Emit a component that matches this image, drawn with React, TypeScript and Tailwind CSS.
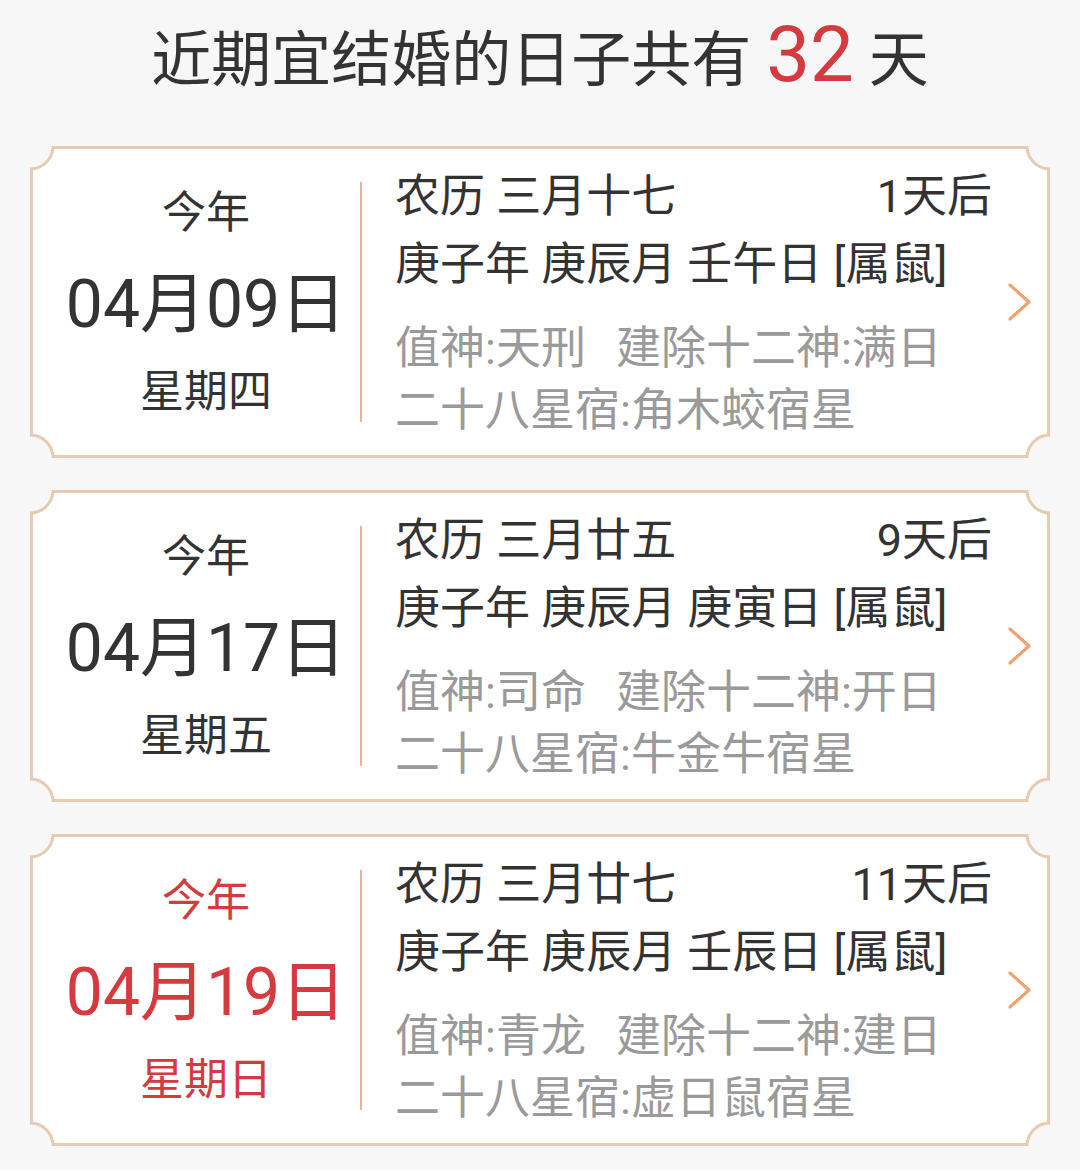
import React from "react";

type Day = {
  date: string;
  week: string;
  lunar: string;
  after: string;
  ganzhi: string;
  zhishen: string;
  jianchu: string;
  xingxiu: string;
  highlight?: boolean;
};

const DAYS: Day[] = [
  {
    date: "04月09日",
    week: "星期四",
    lunar: "农历 三月十七",
    after: "1天后",
    ganzhi: "庚子年 庚辰月 壬午日 [属鼠]",
    zhishen: "值神:天刑",
    jianchu: "建除十二神:满日",
    xingxiu: "二十八星宿:角木蛟宿星",
  },
  {
    date: "04月17日",
    week: "星期五",
    lunar: "农历 三月廿五",
    after: "9天后",
    ganzhi: "庚子年 庚辰月 庚寅日 [属鼠]",
    zhishen: "值神:司命",
    jianchu: "建除十二神:开日",
    xingxiu: "二十八星宿:牛金牛宿星",
  },
  {
    date: "04月19日",
    week: "星期日",
    lunar: "农历 三月廿七",
    after: "11天后",
    ganzhi: "庚子年 庚辰月 壬辰日 [属鼠]",
    zhishen: "值神:青龙",
    jianchu: "建除十二神:建日",
    xingxiu: "二十八星宿:虚日鼠宿星",
    highlight: true,
  },
];

// card frame with concave (ticket-like) corners
const W = 1020;
const H = 312;
const R = 23;
const S = 1.5;
const FRAME = `M ${R} ${S} H ${W - R} A ${R} ${R} 0 0 0 ${W - S} ${R} V ${H - R} A ${R} ${R} 0 0 0 ${W - R} ${H - S} H ${R} A ${R} ${R} 0 0 0 ${S} ${H - R} V ${R} A ${R} ${R} 0 0 0 ${R} ${S} Z`;

function DayCard({ day }: { day: Day }) {
  const tone = day.highlight ? "text-[#d6393e]" : "text-[#333333]";
  return (
    <div className="relative h-[312px] w-[1020px]">
      <svg className="absolute inset-0" width={W} height={H} viewBox={`0 0 ${W} ${H}`}>
        <path d={FRAME} fill="#ffffff" stroke="#e7cbb1" strokeWidth={3} />
      </svg>

      <div className="relative flex h-full">
        {/* left: date block */}
        <div className={`ml-[22px] flex w-[308px] flex-col items-center pt-[37px] ${tone}`}>
          <div className="h-[60px] text-[44px] leading-[60px]">今年</div>
          <div className="mt-[22px] h-[80px] text-[66px] leading-[80px]">{day.date}</div>
          <div className="mt-[17px] h-[60px] text-[44px] leading-[60px]">{day.week}</div>
        </div>

        <div className="mt-[36px] h-[240px] w-[2px] bg-[#f1ae98]" />

        {/* right: lunar details */}
        <div className="w-[630px] pl-[33px] pt-[17px]">
          <div className="flex justify-between text-[45px] leading-[68px] text-[#333333]">
            <span>{day.lunar}</span>
            <span>{day.after}</span>
          </div>
          <div className="text-[45px] leading-[68px] text-[#333333]">{day.ganzhi}</div>
          <div className="mt-[19px] text-[45px] leading-[62px] text-[#9a9a9a]">
            <span>{day.zhishen}</span>
            <span className="ml-[30px]">{day.jianchu}</span>
          </div>
          <div className="text-[45px] leading-[62px] text-[#9a9a9a]">{day.xingxiu}</div>
        </div>

        <div className="ml-[16px] flex items-center">
          <svg width="24" height="40" viewBox="0 0 24 40">
            <polyline
              points="2,3 21,20 2,37"
              fill="none"
              stroke="#f2a271"
              strokeWidth={3.2}
              strokeLinecap="round"
              strokeLinejoin="round"
            />
          </svg>
        </div>
      </div>
    </div>
  );
}

export default function App() {
  return (
    <div
      className="h-[1170px] w-[1080px] bg-[#f7f7f7]"
      style={{ fontFamily: "Roboto, 'Noto Sans CJK SC', sans-serif" }}
    >
      <div className="pt-[15px] text-center text-[60px] leading-[80px] text-[#333333]">
        近期宜结婚的日子共有 <span className="text-[78px] text-[#d6393e]">32</span> 天
      </div>

      <div className="mt-[45px] flex flex-col gap-[32px] px-[30px]">
        {DAYS.map((d) => (
          <DayCard key={d.date} day={d} />
        ))}
      </div>
    </div>
  );
}
